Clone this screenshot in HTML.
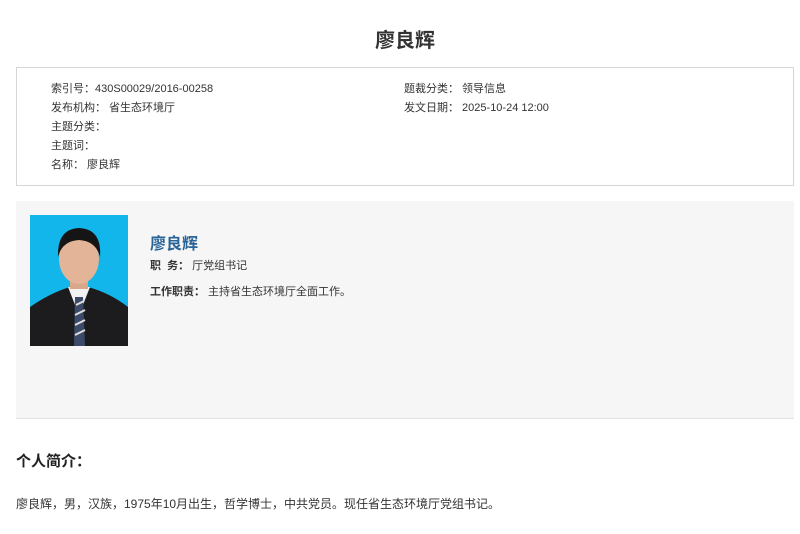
<!DOCTYPE html>
<html><head><meta charset="utf-8"><style>
body{margin:0;background:#fff;font-family:"Liberation Sans","Noto Sans CJK SC",sans-serif;color:#333;width:800px;height:534px;overflow:hidden;position:relative}
.a{position:absolute;white-space:nowrap}
.s{font-size:11px;color:#333;line-height:14px}
</style></head><body>
<div class="a" style="left:0;width:810px;text-align:center;top:24px;font-size:20px;font-weight:bold;color:#333">廖良辉</div>
<div class="a" style="left:16px;top:67px;width:776px;height:117px;border:1px solid #d6d6d6"></div>
<div class="a s" style="left:51px;top:82px">索引号：430S00029/2016-00258</div>
<div class="a s" style="left:51px;top:101px">发布机构：&nbsp;省生态环境厅</div>
<div class="a s" style="left:51px;top:120px">主题分类：</div>
<div class="a s" style="left:51px;top:139px">主题词：</div>
<div class="a s" style="left:51px;top:158px">名称：&nbsp;廖良辉</div>
<div class="a s" style="left:404px;top:82px">题裁分类：&nbsp;领导信息</div>
<div class="a s" style="left:404px;top:101px">发文日期：&nbsp;2025-10-24 12:00</div>
<div class="a" style="left:16px;top:201px;width:778px;height:217px;background:#f6f6f6;border-bottom:1px solid #e2e2e2"></div>
<svg class="a" style="left:30px;top:215px" width="98" height="131" viewBox="0 0 98 131">
<rect width="98" height="131" fill="#13b6ea"/>
<path d="M0 131 L0 92 Q20 78 40 72 L58 72 Q80 78 98 92 L98 131Z" fill="#1c1c1e"/>
<path d="M38 72 L49 100 L60 72 Z" fill="#f2f2f2"/>
<path d="M45 82 L53 82 L55 131 L44 131 Z" fill="#3c4a6a"/>
<path d="M46 90 L54 86 M45 100 L55 95 M45 110 L55 105 M45 120 L55 115" stroke="#ddd" stroke-width="2"/>
<rect x="40" y="58" width="18" height="16" fill="#d9a88a"/>
<ellipse cx="49" cy="44" rx="20" ry="25" fill="#e3b497"/>
<path d="M28 42 Q27 14 49 13 Q72 14 70 42 Q66 26 49 25 Q32 26 28 42Z" fill="#151515"/>
</svg>
<div class="a" style="left:150px;top:230px;font-size:16px;font-weight:bold;color:#2a6496">廖良辉</div>
<div class="a s" style="left:150px;top:259px"><b>职&nbsp;&nbsp;务：</b>&nbsp;厅党组书记</div>
<div class="a s" style="left:150px;top:285px"><b>工作职责：</b>&nbsp;主持省生态环境厅全面工作。</div>
<div class="a" style="left:16px;top:450px;font-size:15px;font-weight:bold;color:#222">个人简介：</div>
<div class="a" style="left:16px;top:495px;font-size:12px;color:#333">廖良辉，男，汉族，1975年10月出生，哲学博士，中共党员。现任省生态环境厅党组书记。</div>
</body></html>
